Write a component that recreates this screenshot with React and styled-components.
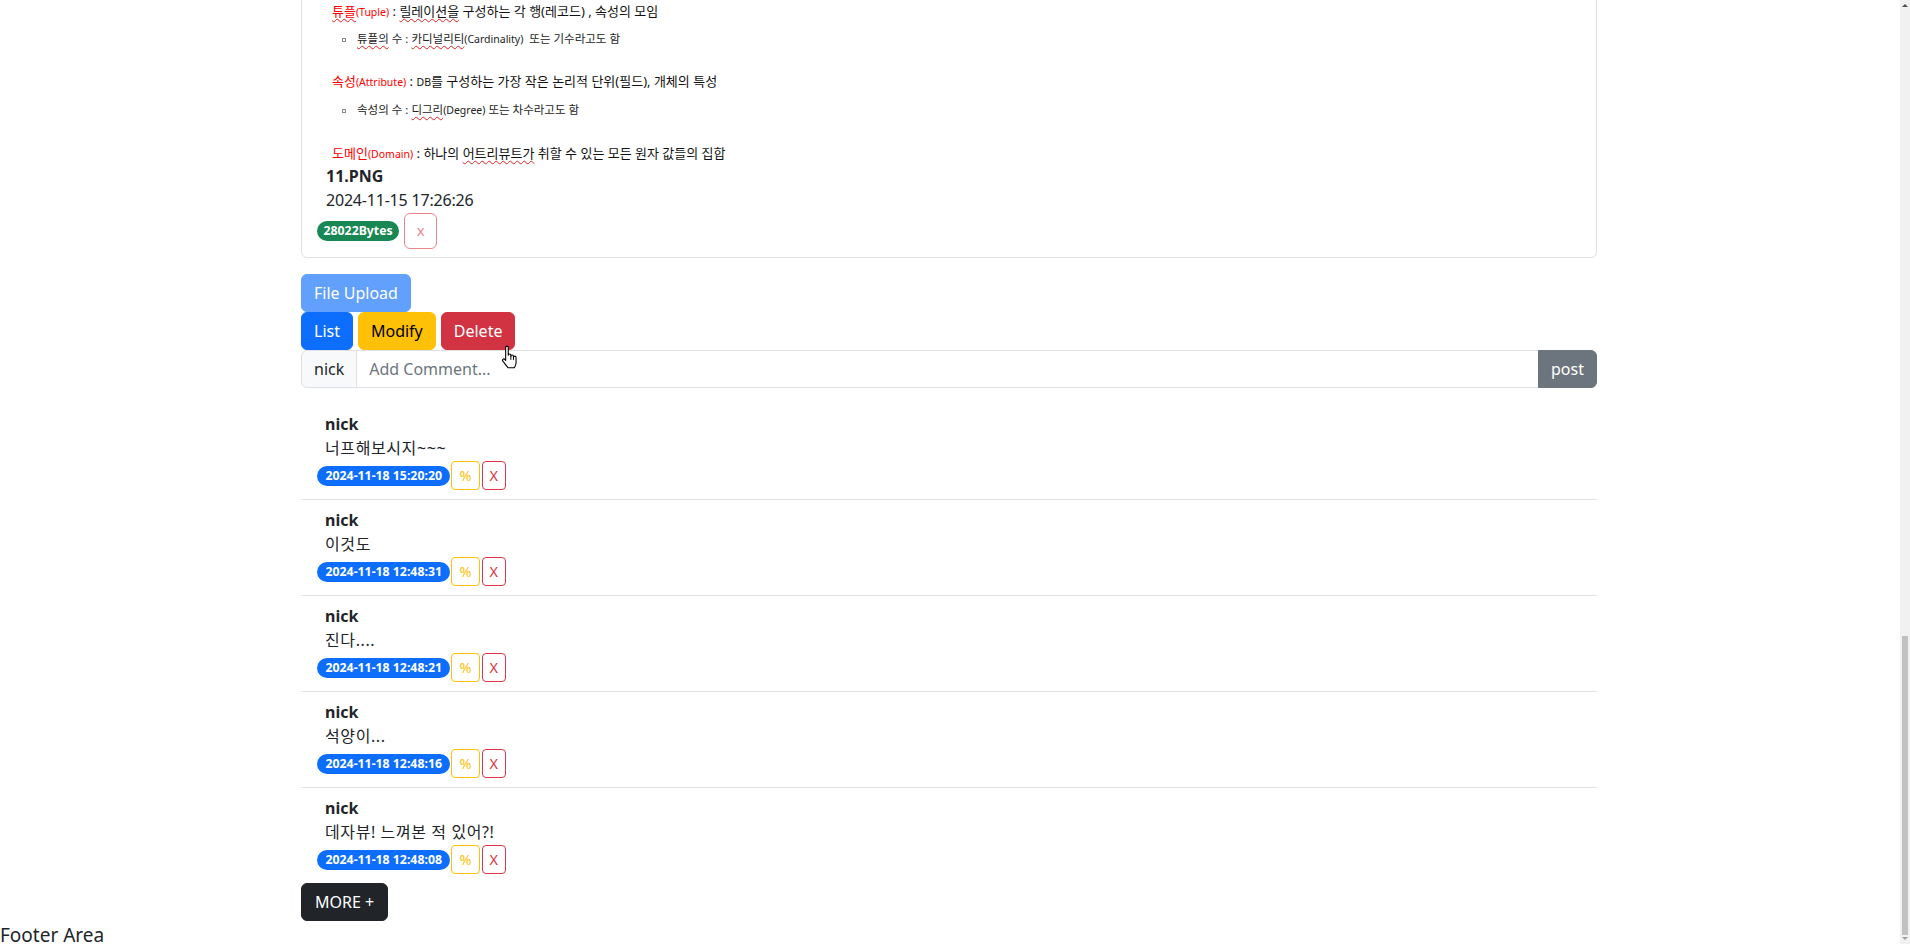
import styled, { createGlobalStyle } from "styled-components";

const GlobalStyle = createGlobalStyle`
  html, body, #root {
    height: 100%;
  }
  body {
    margin: 0;
    overflow: hidden;
    background: #fff;
    color: #212529;
    font-family: "Noto Sans", "Noto Sans CJK KR", sans-serif;
    font-size: 16px;
    line-height: 1.5;
  }
  *, *::before, *::after {
    box-sizing: border-box;
  }
`;

// 댓글 목록
const comments = [
  { id: 1, nick: "nick", text: "너프해보시지~~~", date: "2024-11-18 15:20:20" },
  { id: 2, nick: "nick", text: "이것도", date: "2024-11-18 12:48:31" },
  { id: 3, nick: "nick", text: "진다....", date: "2024-11-18 12:48:21" },
  { id: 4, nick: "nick", text: "석양이...", date: "2024-11-18 12:48:16" },
  { id: 5, nick: "nick", text: "데자뷰! 느껴본 적 있어?!", date: "2024-11-18 12:48:08" },
];

const HandCursor = () => (
  <svg width="20" height="26" viewBox="0 0 18 24">
    <path
      d="M5 2.2a1.2 1.2 0 0 1 2.4 0v7.3a1.2 1.2 0 0 1 2.4 0v1a1.2 1.2 0 0 1 2.4 0v1a1.2 1.2 0 0 1 2.4 0v4.6c0 2.2-0.9 3.6-1.6 4.9H7.2c-1-1.6-2.9-3.6-4.8-6.1a1.2 1.2 0 0 1 1.8-1.6L5 14.3z"
      fill="#fff"
      stroke="#000"
      strokeWidth="1"
      strokeLinejoin="round"
    />
    <path d="M9.8 10.5v3.2M12.2 11.5v2.4" stroke="#000" strokeWidth="0.9" />
  </svg>
);

const App = () => {
  return (
    <>
      <GlobalStyle />
      <Screen>
        <Viewport>
          <Container>
            <Card>
              <Content>
                <Para>
                  <Red>
                    <Wavy>튜플</Wavy>
                    <Small>(Tuple)</Small>
                  </Red>{" "}
                  : <Wavy>릴레이션을</Wavy> 구성하는 각 행(레코드) , 속성의 모임
                </Para>
                <SubItem $top={7}>
                  <Wavy>튜플의</Wavy> 수 : <Wavy>카디널리티</Wavy>
                  <Small>(Cardinality)</Small>&nbsp; 또는 기수라고도 함
                </SubItem>
                <Para $top={22}>
                  <Red>
                    속성<Small>(Attribute)</Small>
                  </Red>{" "}
                  : <Small>DB</Small>를 구성하는 가장 작은 논리적 단위(필드), 개체의 특성
                </Para>
                <SubItem $top={8}>
                  속성의 수 : <Wavy>디그리</Wavy>
                  <Small>(Degree)</Small> 또는 차수라고도 함
                </SubItem>
                <Para $top={23}>
                  <Red>
                    도메인<Small>(Domain)</Small>
                  </Red>{" "}
                  : 하나의 <Wavy>어트리뷰트가</Wavy> 취할 수 있는 모든 원자 값들의 집합
                </Para>
              </Content>
              <FileItem>
                <FileName>11.PNG</FileName>
                <FileDate>2024-11-15 17:26:26</FileDate>
                <FileRow>
                  <Badge $color="#198754" $pad={6.5}>
                    28022Bytes
                  </Badge>
                  <FileRemove>x</FileRemove>
                </FileRow>
              </FileItem>
            </Card>

            <UploadButton>File Upload</UploadButton>

            <ButtonRow>
              <Button $bg="#0d6efd">List</Button>
              <Button $bg="#ffc107" $color="#000">
                Modify
              </Button>
              <Button $bg="#d13342">Delete</Button>
              <Cursor>
                <HandCursor />
              </Cursor>
            </ButtonRow>

            <CommentForm>
              <Addon>nick</Addon>
              <CommentInput placeholder="Add Comment..." />
              <PostButton>post</PostButton>
            </CommentForm>

            <CommentList>
              {comments.map((c) => (
                <CommentItem key={c.id}>
                  <Nick>{c.nick}</Nick>
                  <CommentText>{c.text}</CommentText>
                  <CommentMeta>
                    <Badge $color="#0d6efd">{c.date}</Badge>
                    <SmallButton $color="#ffc107" $gap={1}>
                      %
                    </SmallButton>
                    <SmallButton $color="#dc3545" $gap={2}>
                      X
                    </SmallButton>
                  </CommentMeta>
                </CommentItem>
              ))}
            </CommentList>

            <MoreButton>MORE +</MoreButton>
          </Container>
          <Footer>Footer Area</Footer>
        </Viewport>

        <ScrollTrack>
          <ArrowUp />
          <TrackSpace />
          <Thumb />
          <ArrowDown />
        </ScrollTrack>
      </Screen>
    </>
  );
};

export default App;

const Screen = styled.div`
  display: flex;
  height: 100%;
`;

const Viewport = styled.div`
  flex: 1;
  overflow: hidden;
`;

const Container = styled.div`
  width: 1296px;
  margin-left: calc(50% - 649px);
`;

const Card = styled.div`
  margin-top: -16px;
  border: 1px solid #dee2e6;
  border-radius: 6px;
`;

const Content = styled.div`
  padding: 16px 0 0 30px;
  color: #111;
  font-family: "Noto Sans", "Noto Sans CJK KR", sans-serif;
`;

const Para = styled.div`
  margin-top: ${(p) => p.$top || 0}px;
  font-size: 13px;
  line-height: 20px;
  white-space: nowrap;
`;

const SubItem = styled.div`
  position: relative;
  margin-top: ${(p) => p.$top || 0}px;
  padding-left: 25px;
  font-size: 11.5px;
  line-height: 20px;
  color: #222;
  white-space: nowrap;

  &::before {
    content: "";
    position: absolute;
    left: 10px;
    top: 9px;
    width: 4px;
    height: 4px;
    border: 1px solid #888;
  }
`;

const Red = styled.span`
  color: #ff0000;
`;

const Small = styled.span`
  font-size: 10.5px;
`;

const Wavy = styled.span`
  text-decoration: underline wavy #e02020;
  text-decoration-thickness: 1px;
  text-underline-offset: 2px;
`;

const FileItem = styled.div`
  padding: 0 15px 8px;
`;

const FileName = styled.div`
  margin-left: 9px;
  font-weight: 700;
  line-height: 24px;
`;

const FileDate = styled.div`
  margin-left: 9px;
  line-height: 24px;
  letter-spacing: -0.2px;
`;

const FileRow = styled.div`
  display: flex;
  align-items: center;
  gap: 5px;
  height: 37px;
`;

const Badge = styled.span`
  display: inline-block;
  padding: 4px ${(p) => p.$pad || 8.5}px;
  border-radius: 50rem;
  background: ${(p) => p.$color};
  color: #fff;
  font-size: 12.3px;
  font-weight: 700;
  line-height: 12px;
  white-space: nowrap;
`;

const FileRemove = styled.button`
  width: 33px;
  height: 36px;
  padding: 0;
  border: 1px solid #dc3545;
  border-radius: 6px;
  background: transparent;
  color: #dc3545;
  opacity: 0.6;
  font-family: inherit;
  font-size: 15px;
  line-height: 1;
`;

const Button = styled.button`
  height: 38px;
  padding: 0 12px;
  border: 1px solid ${(p) => p.$bg};
  border-radius: 6px;
  background: ${(p) => p.$bg};
  color: ${(p) => p.$color || "#fff"};
  font-family: inherit;
  font-size: 16px;
  line-height: 24px;
`;

const UploadButton = styled(Button).attrs({ $bg: "#0d6efd" })`
  display: block;
  margin-top: 16px;
  opacity: 0.65;
`;

const ButtonRow = styled.div`
  position: relative;
  display: flex;
  gap: 5px;
`;

const Cursor = styled.div`
  position: absolute;
  left: 199px;
  top: 33px;
  z-index: 2;
  line-height: 0;
`;

const CommentForm = styled.div`
  display: flex;
  height: 38px;
`;

const Addon = styled.span`
  display: flex;
  align-items: center;
  padding: 0 12px;
  border: 1px solid #dee2e6;
  border-radius: 6px 0 0 6px;
  background: #f8f9fa;
  line-height: 24px;
`;

const CommentInput = styled.input`
  flex: 1;
  padding: 0 12px;
  border: 1px solid #dee2e6;
  border-left: none;
  border-right: none;
  outline: none;
  font-family: inherit;
  font-size: 16px;
  color: #212529;

  &::placeholder {
    color: #6c757d;
  }
`;

const PostButton = styled.button`
  padding: 0 12px;
  border: 1px solid #6c757d;
  border-radius: 0 6px 6px 0;
  background: #6c757d;
  color: #fff;
  font-family: inherit;
  font-size: 16px;
`;

const CommentList = styled.div`
  margin-top: 16px;
`;

const CommentItem = styled.div`
  padding: 8px 16px;

  & + & {
    border-top: 1px solid #dee2e6;
  }
`;

const Nick = styled.div`
  margin-left: 8px;
  font-weight: 700;
  line-height: 24px;
`;

const CommentText = styled.div`
  margin-left: 8px;
  line-height: 24px;
  letter-spacing: 0.6px;
`;

const CommentMeta = styled.div`
  display: flex;
  align-items: center;
  height: 31px;
`;

const SmallButton = styled.button`
  margin-left: ${(p) => p.$gap}px;
  padding: 3px 7px;
  border: 1px solid ${(p) => p.$color};
  border-radius: 4px;
  background: transparent;
  color: ${(p) => p.$color};
  font-family: inherit;
  font-size: 14.5px;
  line-height: 21px;
`;

const MoreButton = styled(Button).attrs({ $bg: "#212529" })`
  display: block;
  padding: 0 13px;
`;

const Footer = styled.div`
  font-size: 19px;
  line-height: 24px;
  padding-top: 2px;
`;

const ScrollTrack = styled.div`
  display: flex;
  flex-direction: column;
  align-items: center;
  width: 10px;
  background: #f1f1f1;
`;

const ArrowUp = styled.div`
  margin-top: 4px;
  width: 0;
  height: 0;
  border-left: 3px solid transparent;
  border-right: 3px solid transparent;
  border-bottom: 3px solid #505050;
`;

const TrackSpace = styled.div`
  flex: 1;
`;

const Thumb = styled.div`
  width: 6px;
  height: 299px;
  background: #c1c1c1;
`;

const ArrowDown = styled.div`
  margin: 2px 0 4px;
  width: 0;
  height: 0;
  border-left: 3px solid transparent;
  border-right: 3px solid transparent;
  border-top: 3px solid #a0a0a0;
`;
